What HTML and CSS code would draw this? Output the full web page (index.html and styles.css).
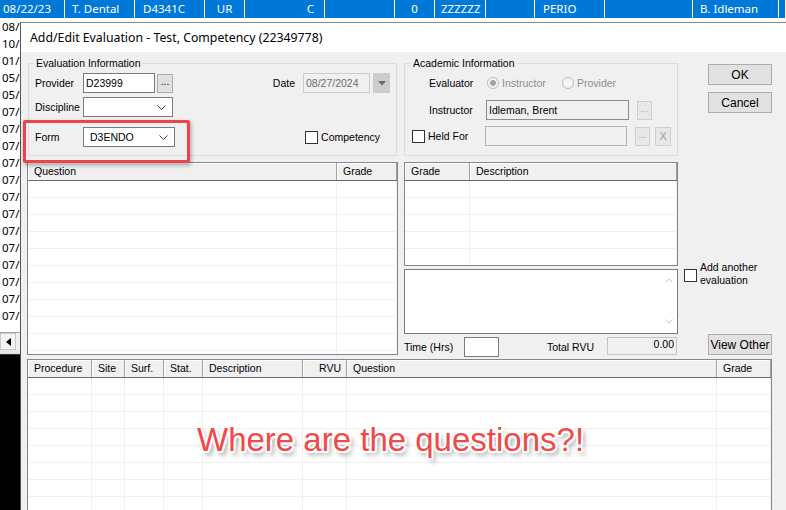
FILE: index.html
```html
<!DOCTYPE html>
<html lang="en">
<head>
<meta charset="utf-8">
<title>Add/Edit Evaluation</title>
<link rel="stylesheet" href="styles.css">
</head>
<body>
<div class="screen">
  <!-- patient activity list behind the dialog; only its date edge shows -->
  <div class="records">
    <div class="rec sel">
      <span class="c-date">08/22/23</span><span class="c-name">T. Dental</span><span class="c-code">D4341C</span><span class="c-ctr">UR</span><span class="c-stat">C</span><span></span><span class="c-ctr">0</span><span class="c-z">ZZZZZZ</span><span></span><span class="c-dept">PERIO</span><span></span><span class="c-prov">B. Idleman</span><span></span>
    </div>
    <div class="rec"><span class="c-date">08/</span></div>
    <div class="rec"><span class="c-date">10/</span></div>
    <div class="rec"><span class="c-date">01/</span></div>
    <div class="rec"><span class="c-date">05/</span></div>
    <div class="rec"><span class="c-date">05/</span></div>
    <div class="rec"><span class="c-date">07/</span></div>
    <div class="rec"><span class="c-date">07/</span></div>
    <div class="rec"><span class="c-date">07/</span></div>
    <div class="rec"><span class="c-date">07/</span></div>
    <div class="rec"><span class="c-date">07/</span></div>
    <div class="rec"><span class="c-date">07/</span></div>
    <div class="rec"><span class="c-date">07/</span></div>
    <div class="rec"><span class="c-date">07/</span></div>
    <div class="rec"><span class="c-date">07/</span></div>
    <div class="rec"><span class="c-date">07/</span></div>
    <div class="rec"><span class="c-date">07/</span></div>
    <div class="rec"><span class="c-date">07/</span></div>
    <div class="rec"><span class="c-date">07/</span></div>
    <div class="rec"><span class="c-date"></span></div>
  </div>
  <div class="hscroll">
    <span class="sb-btn"><svg width="5" height="8" viewBox="0 0 5 8"><path d="M5 0V8L0 4Z" fill="#000"/></svg></span>
    <span class="sb-track"></span>
  </div>
  <div class="status"></div>

  <!-- evaluation dialog -->
  <div class="dialog">
    <div class="titlebar">Add/Edit Evaluation - Test, Competency (22349778)</div>
    <div class="dlg-body">
      <fieldset class="group eval">
        <legend>Evaluation Information</legend>
        <div class="frow">
          <span class="lbl">Provider</span>
          <span class="tb provider">D23999</span>
          <span class="dots">...</span>
          <span class="date-wrap">
            <span class="date-lbl">Date</span>
            <span class="tb date">08/27/2024</span>
            <span class="drop"><svg width="8" height="5" viewBox="0 0 8 5"><path d="M0 0H8L4 4.5Z" fill="#6a6a6a"/></svg></span>
          </span>
        </div>
        <div class="frow r2">
          <span class="lbl">Discipline</span>
          <span class="combo discipline"><span></span><svg class="chev" width="9" height="5" viewBox="0 0 9 5"><path d="M0.5 0.5L4.5 4.5L8.5 0.5" fill="none" stroke="#404040"/></svg></span>
        </div>
        <div class="frow r3">
          <span class="lbl">Form</span>
          <span class="combo form"><span>D3ENDO</span><svg class="chev" width="9" height="5" viewBox="0 0 9 5"><path d="M0.5 0.5L4.5 4.5L8.5 0.5" fill="none" stroke="#404040"/></svg></span>
          <span class="chk competency"><span class="box"></span>Competency</span>
        </div>
      </fieldset>

      <fieldset class="group acad">
        <legend>Academic Information</legend>
        <div class="frow">
          <span class="lbl2">Evaluator</span>
          <span class="radio on first"><span class="dot"></span>Instructor</span>
          <span class="radio"><span class="dot"></span>Provider</span>
        </div>
        <div class="frow a2">
          <span class="lbl2">Instructor</span>
          <span class="tb ro">Idleman, Brent</span>
          <span class="dots off">...</span>
        </div>
        <div class="frow a3">
          <span class="chk held"><span class="box"></span>Held For</span>
          <span class="tb ro held-tb"></span>
          <span class="dots off">...</span>
          <span class="xbtn">X</span>
        </div>
      </fieldset>

      <div class="actions">
        <button class="btn">OK</button>
        <button class="btn">Cancel</button>
      </div>

      <div class="lv questions">
        <div class="lv-head"><span>Question</span><span>Grade</span></div>
        <div class="lv-row"><span></span><span></span></div>
        <div class="lv-row"><span></span><span></span></div>
        <div class="lv-row"><span></span><span></span></div>
        <div class="lv-row"><span></span><span></span></div>
        <div class="lv-row"><span></span><span></span></div>
        <div class="lv-row"><span></span><span></span></div>
        <div class="lv-row"><span></span><span></span></div>
        <div class="lv-row"><span></span><span></span></div>
        <div class="lv-row"><span></span><span></span></div>
        <div class="lv-row"><span></span><span></span></div>
        <div class="lv-row"><span></span><span></span></div>
      </div>

      <div class="mid">
        <div class="lv grades">
          <div class="lv-head"><span>Grade</span><span>Description</span></div>
          <div class="lv-row"><span></span><span></span></div>
          <div class="lv-row"><span></span><span></span></div>
          <div class="lv-row"><span></span><span></span></div>
          <div class="lv-row"><span></span><span></span></div>
          <div class="lv-row"><span></span><span></span></div>
        </div>
        <div class="memo">
          <span class="vbar">
            <svg width="8" height="5" viewBox="0 0 8 5"><path d="M0.5 4.5L4 1L7.5 4.5" fill="none" stroke="#c6c6c6"/></svg>
            <svg width="8" height="5" viewBox="0 0 8 5"><path d="M0.5 0.5L4 4L7.5 0.5" fill="none" stroke="#c6c6c6"/></svg>
          </span>
        </div>
        <div class="time-row">
          <span class="time-lbl">Time (Hrs)</span>
          <span class="time-box"></span>
          <span class="rvu-lbl">Total RVU</span>
          <span class="rvu-box">0.00</span>
        </div>
      </div>

      <div class="side">
        <span class="chk another"><span class="box"></span><span>Add another<br>evaluation</span></span>
        <button class="btn view-other">View Other</button>
      </div>

      <div class="lv procs">
        <div class="lv-head"><span>Procedure</span><span>Site</span><span>Surf.</span><span>Stat.</span><span>Description</span><span class="ra">RVU</span><span>Question</span><span>Grade</span></div>
        <div class="lv-row"><span></span><span></span><span></span><span></span><span></span><span></span><span></span><span></span></div>
        <div class="lv-row"><span></span><span></span><span></span><span></span><span></span><span></span><span></span><span></span></div>
        <div class="lv-row"><span></span><span></span><span></span><span></span><span></span><span></span><span></span><span></span></div>
        <div class="lv-row"><span></span><span></span><span></span><span></span><span></span><span></span><span></span><span></span></div>
        <div class="lv-row"><span></span><span></span><span></span><span></span><span></span><span></span><span></span><span></span></div>
        <div class="lv-row"><span></span><span></span><span></span><span></span><span></span><span></span><span></span><span></span></div>
        <div class="lv-row"><span></span><span></span><span></span><span></span><span></span><span></span><span></span><span></span></div>
        <div class="lv-row"><span></span><span></span><span></span><span></span><span></span><span></span><span></span><span></span></div>
      </div>
    </div>
  </div>

  <!-- annotation layer -->
  <div class="callout"></div>
  <div class="shout">Where are the questions?!</div>
</div>
</body>
</html>
```

FILE: styles.css
```css
* { box-sizing: border-box; }

html, body { margin: 0; padding: 0; }

body {
  width: 786px;
  height: 510px;
  overflow: hidden;
  background: #000;
  font-family: "Liberation Sans", Arial, sans-serif;
  font-size: 10.5px;
  color: #000;
}

.screen {
  position: relative;
  width: 786px;
  height: 510px;
  overflow: hidden;
}

/* ---------- background record list ---------- */
.records {
  height: 332px;
  overflow: hidden;
  background: #fff;
  font-family: "Noto Sans", sans-serif;
  font-size: 11.5px;
}

.rec {
  display: grid;
  grid-template-columns: 20px 1fr;
  height: 17px;
  line-height: 17px;
}

.rec span {
  padding-left: 2px;
  white-space: nowrap;
}

.rec.sel {
  grid-template-columns: 65px 70px 70px 40px 80px 70px 40px 51px 49px 70px 88px 86px 1fr;
  height: 18px;
  line-height: 18px;
  background: #0078d7;
  color: #fff;
}

.rec.sel span { border-right: 1px solid #fff; padding-left: 3px; overflow: hidden; }

.rec.sel .c-name { padding-left: 7px; }
.rec.sel .c-code { padding-left: 8px; }
.rec.sel .c-ctr { padding-left: 0; text-align: center; }
.rec.sel .c-stat { text-align: right; padding-right: 10px; }
.rec.sel .c-z { padding-left: 6px; }
.rec.sel .c-dept { padding-left: 8px; }
.rec.sel .c-prov { padding-left: 7px; }

.hscroll {
  height: 18px;
  display: flex;
  background: #f0f0f0;
  border-top: 1px solid #a0a0a0;
}

.sb-btn {
  width: 16px;
  display: flex;
  align-items: center;
  justify-content: center;
  border: 1px solid #c8c8c8;
  background: #f4f4f4;
}

.sb-track { flex: 1; background: #f0f0f0; }

.status {
  height: 5px;
  background: #dde6ef;
  border-bottom: 1px solid #303030;
}

/* ---------- dialog frame ---------- */
.dialog {
  position: absolute;
  left: 20px;
  top: 22px;
  right: 0;
  bottom: 0;
  background: #f0f0f0;
  border-left: 1px solid #555;
  border-top: 1px solid #8a8a8a;
}

.titlebar {
  height: 29px;
  background: #fff;
  padding-left: 9px;
  font-family: "Noto Sans", sans-serif;
  font-size: 12.3px;
  line-height: 29px;
  white-space: nowrap;
}

.dlg-body {
  display: grid;
  grid-template-columns: 371px 274px 88px;
  column-gap: 6px;
  padding: 5px 0 0 6px;
}

/* ---------- group boxes ---------- */
.group {
  margin: 0;
  min-width: 0;
  height: 99px;
  border: 1px solid #dcdcdc;
  padding: 3px 6px 0 5px;
}

.group legend {
  padding: 0 2px;
  line-height: 13px;
}

.eval { margin: 0 1px; }
.acad { padding-left: 6px; }

.frow {
  display: flex;
  align-items: center;
  height: 20px;
}

.r2 { margin-top: 4px; }
.r3 { margin-top: 10px; }
.a2 { margin-top: 7px; }
.a3 { margin-top: 6px; }

.lbl { width: 49px; padding-left: 1px; }
.lbl2 { width: 57px; margin-left: 18px; }

.tb {
  display: block;
  height: 20px;
  border: 1px solid #7a7a7a;
  background: #fff;
  line-height: 18px;
  padding-left: 2px;
  white-space: nowrap;
}

.provider { width: 72px; }

.dots {
  width: 16px;
  height: 19px;
  margin-left: 2px;
  border: 1px solid #adadad;
  background: #e1e1e1;
  font-size: 10px;
  line-height: 14px;
  text-align: center;
}

.dots.off {
  width: 15px;
  margin-left: 8px;
  border-color: #cfcfcf;
  background: #e8e8e8;
  color: #a8a8a8;
}

.xbtn {
  width: 16px;
  height: 19px;
  margin-left: 5px;
  border: 1px solid #cfcfcf;
  background: #e8e8e8;
  color: #a0a0a0;
  font-size: 11px;
  line-height: 17px;
  text-align: center;
}

.date-wrap {
  margin-left: auto;
  display: flex;
  align-items: center;
}

.date-lbl { margin-right: 8px; }

.tb.date {
  width: 67px;
  border-color: #cccccc;
  background: #f0f0f0;
  color: #6d6d6d;
}

.drop {
  width: 17px;
  height: 20px;
  margin-left: 3px;
  background: #cccccc;
  display: flex;
  align-items: center;
  justify-content: center;
}

.combo {
  display: flex;
  align-items: center;
  justify-content: space-between;
  height: 20px;
  border: 1px solid #7a7a7a;
  background: #fff;
  padding: 0 6px 0 6px;
}

.discipline { width: 90px; }
.form { width: 92px; }

.chk {
  display: flex;
  align-items: center;
}

.chk .box {
  flex: none;
  width: 13px;
  height: 13px;
  border: 1px solid #333;
  background: #fff;
  margin-right: 3px;
}

.competency { margin-left: auto; margin-right: 10px; }

.radio {
  display: flex;
  align-items: center;
  color: #8d8d8d;
}

.radio.first { width: 75px; margin-left: 1px; }

.radio .dot {
  width: 12px;
  height: 12px;
  margin-right: 3px;
  border-radius: 50%;
  border: 1px solid #bcbcbc;
  background: #f3f3f3;
}

.radio.on .dot {
  background: radial-gradient(circle, #a4a4a4 0 2.6px, #f3f3f3 3.2px);
}

.tb.ro {
  width: 143px;
  background: #f0f0f0;
  border-color: #8c8c8c;
}

.tb.held-tb { border-color: #b4b4b4; }

.held { width: 75px; padding-left: 1px; }

/* ---------- push buttons ---------- */
.actions {
  display: flex;
  flex-direction: column;
  gap: 7px;
  padding: 7px 0 0 24px;
}

.btn {
  width: 64px;
  height: 21px;
  padding: 0;
  border: 1px solid #adadad;
  background: #e1e1e1;
  font-family: "Liberation Sans", Arial, sans-serif;
  font-size: 12px;
  color: #000;
}

/* ---------- list views ---------- */
.lv {
  border: 1px solid #828790;
  background: #fff;
  overflow: hidden;
}

.lv-head {
  display: grid;
  height: 18px;
  border-bottom: 1px solid #6b6b6b;
}

.lv-head span {
  background: #f0f0f0;
  border-right: 1px solid #a0a0a0;
  box-shadow: inset 1px 1px 0 #fff;
  padding-left: 6px;
  line-height: 17px;
  white-space: nowrap;
}

.lv-head .ra { text-align: right; padding: 0 5px 0 0; }

.lv-row {
  display: grid;
  height: 17px;
  border-bottom: 1px solid #f0f0f0;
}

.lv-row span { border-right: 1px solid #f0f0f0; }

.questions {
  grid-column: 1;
  margin-top: 6px;
  height: 193px;
}

.questions .lv-head,
.questions .lv-row { grid-template-columns: 309px 1fr; }

.mid {
  grid-column: 2;
  margin-top: 6px;
  display: flex;
  flex-direction: column;
}

.grades { height: 104px; }

.grades .lv-head,
.grades .lv-row { grid-template-columns: 65px 1fr; }

.memo {
  height: 65px;
  margin-top: 3px;
  border: 1px solid #7a7a7a;
  background: #fff;
  display: flex;
  justify-content: flex-end;
}

.vbar {
  width: 17px;
  display: flex;
  flex-direction: column;
  justify-content: space-between;
  align-items: center;
  padding: 8px 0 9px;
}

.time-row {
  display: flex;
  align-items: center;
  height: 20px;
  margin-top: 3px;
}

.time-lbl { width: 60px; }

.time-box {
  width: 35px;
  height: 20px;
  border: 1px solid #7a7a7a;
  background: #fff;
}

.rvu-lbl { width: 60px; margin-left: 48px; }

.rvu-box {
  align-self: flex-start;
  width: 70px;
  height: 18px;
  border: 1px solid #c4c4c4;
  background: #f0f0f0;
  text-align: right;
  padding-right: 2px;
  line-height: 13px;
}

.side {
  grid-column: 3;
  margin-top: 6px;
  display: flex;
  flex-direction: column;
}

.another {
  align-items: flex-start;
  margin-top: 99px;
  line-height: 13px;
}

.another .box { margin-top: 8px; }

.view-other {
  margin: auto 0 2px 24px;
}

.procs {
  grid-column: 1 / -1;
  margin-top: 2px;
  height: 160px;
}

.procs .lv-head,
.procs .lv-row { grid-template-columns: 64px 33px 39px 39px 100px 44px 370px 54px; }

/* ---------- annotation ---------- */
.callout {
  position: absolute;
  left: 23px;
  top: 120px;
  width: 167px;
  height: 43px;
  border: 3px solid #e9464b;
  border-radius: 2px;
  box-shadow: 1px 2px 4px rgba(0, 0, 0, 0.35);
}

.shout {
  position: absolute;
  left: 197px;
  top: 423px;
  font-family: "Liberation Sans", Arial, sans-serif;
  font-size: 33px;
  line-height: 33px;
  color: #f14848;
  white-space: nowrap;
  text-shadow:
    2px 0 0 #fff, -2px 0 0 #fff, 0 2px 0 #fff, 0 -2px 0 #fff,
    1.5px 1.5px 0 #fff, -1.5px -1.5px 0 #fff, 1.5px -1.5px 0 #fff, -1.5px 1.5px 0 #fff,
    3px 4px 5px rgba(0, 0, 0, 0.45);
}
```
